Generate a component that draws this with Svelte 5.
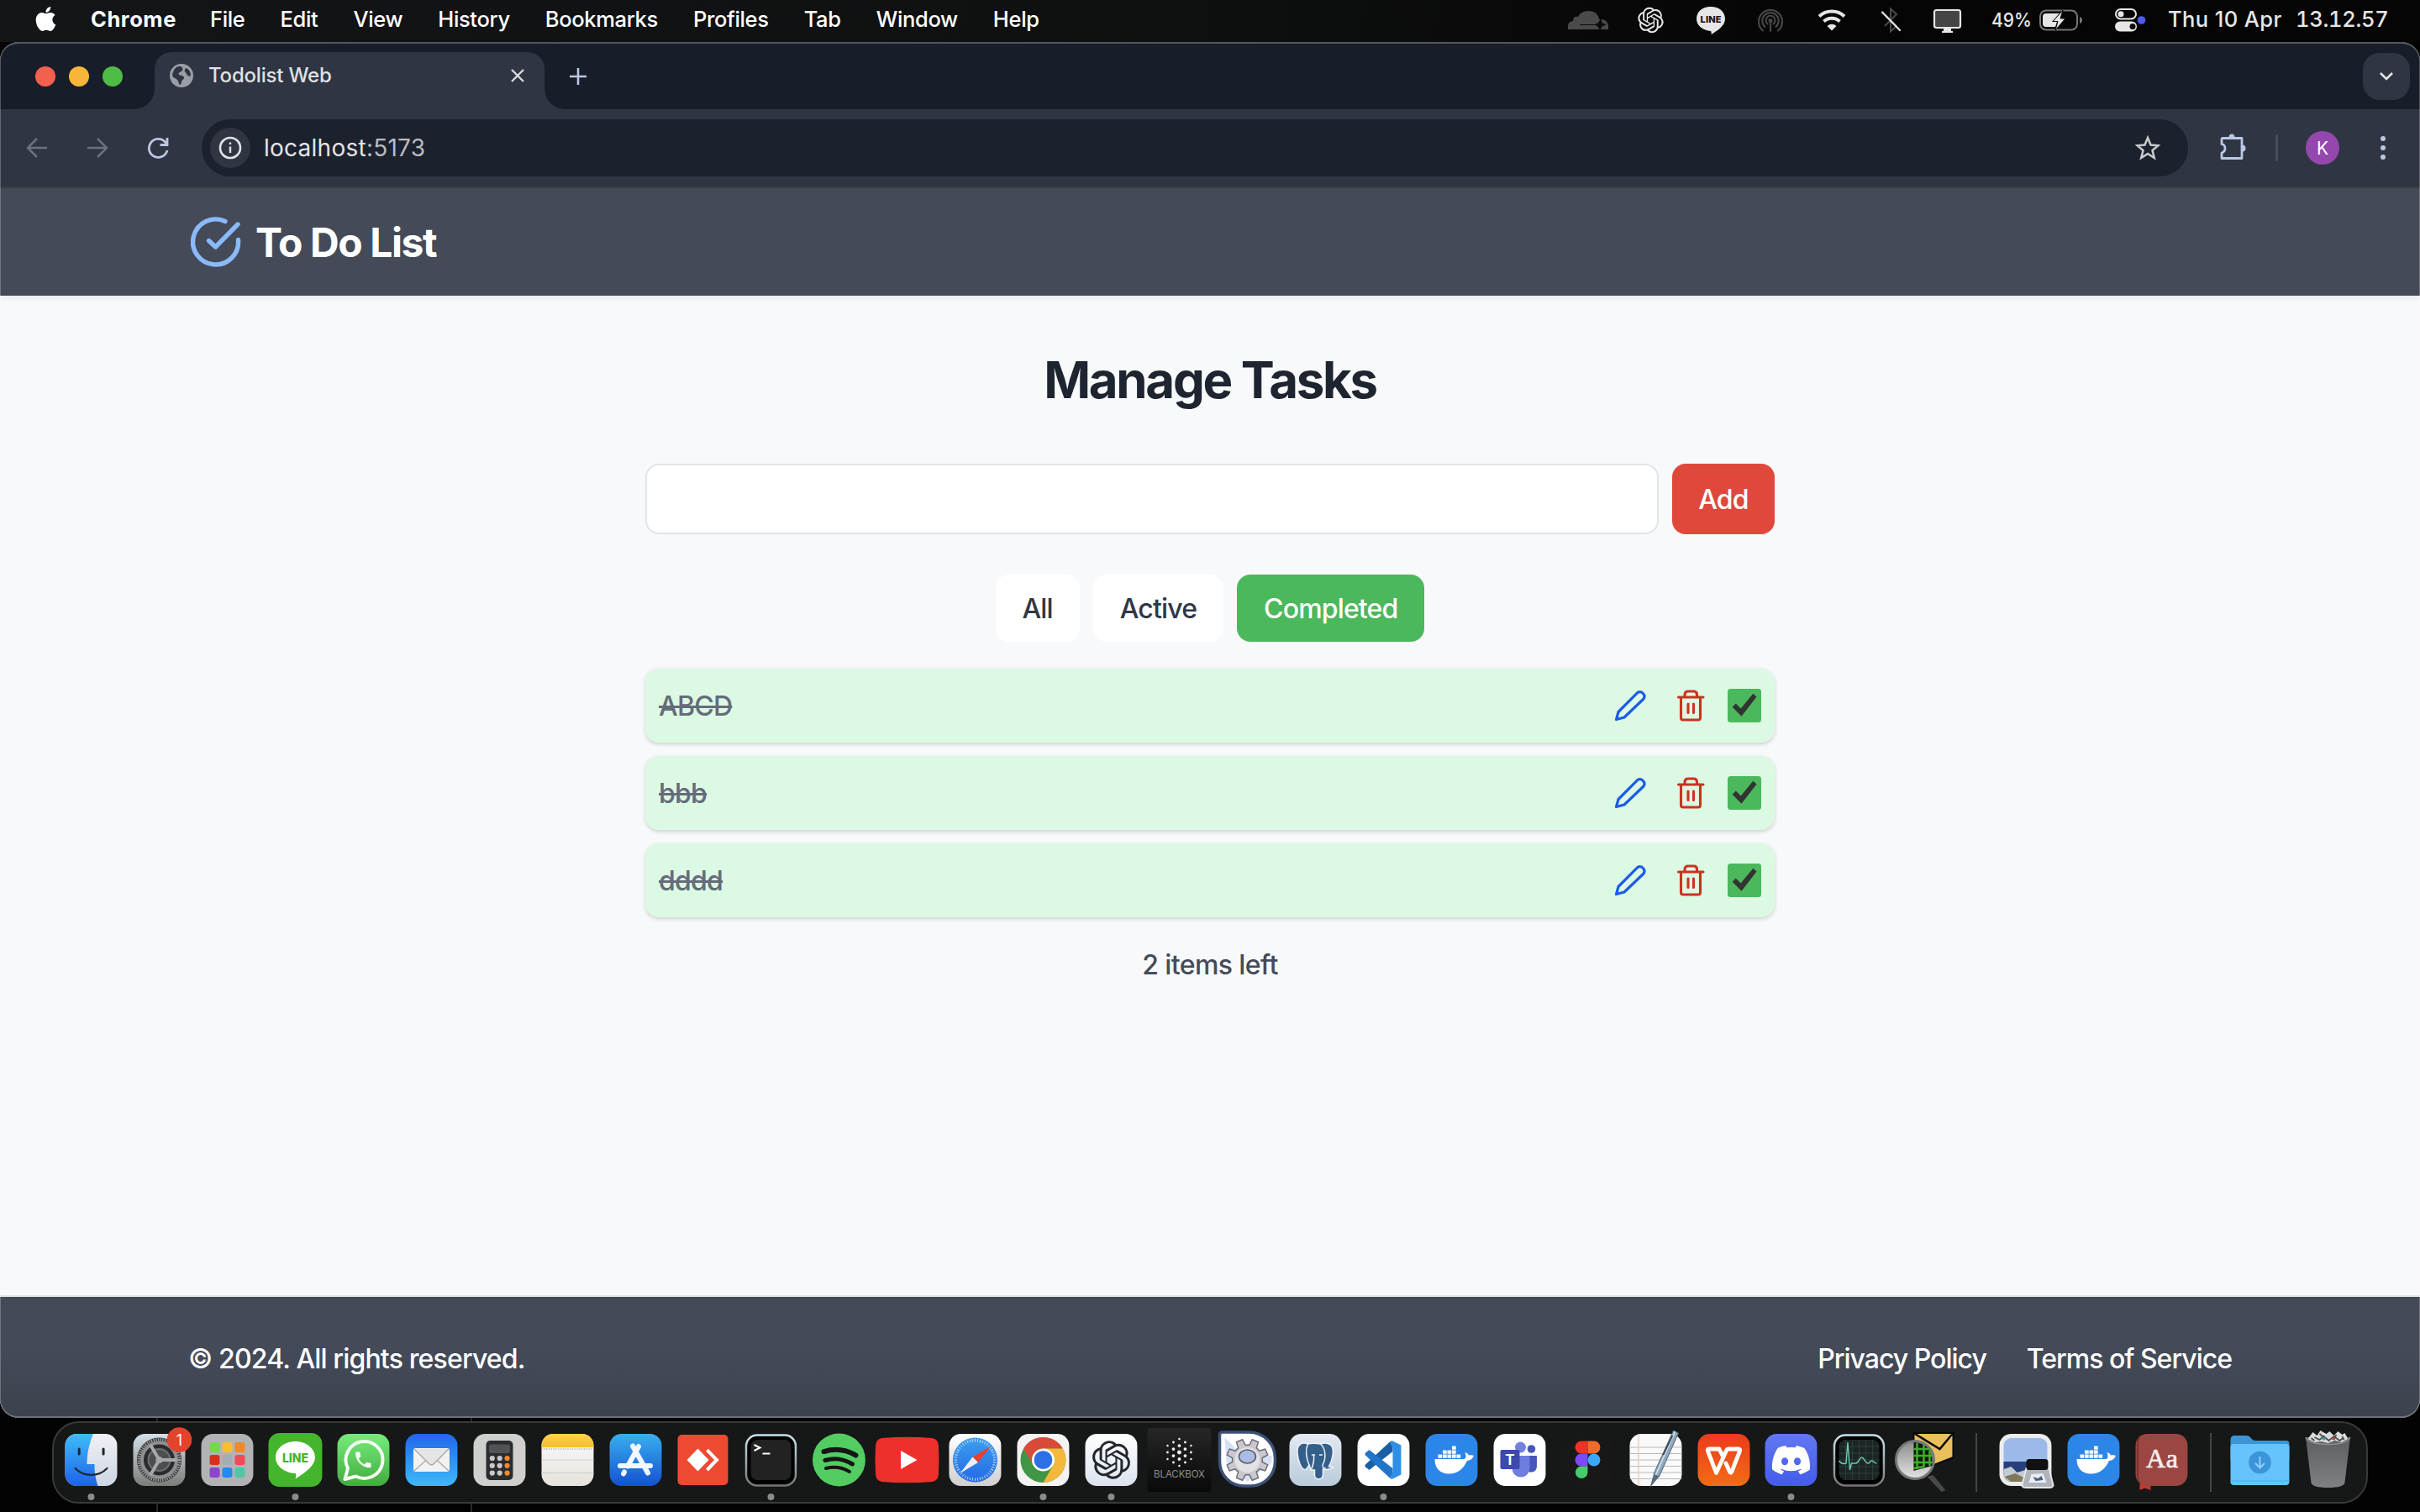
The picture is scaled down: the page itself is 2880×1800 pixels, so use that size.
<script>
  const menus = ['File', 'Edit', 'View', 'History', 'Bookmarks', 'Profiles', 'Tab', 'Window', 'Help'];
  let filter = $state('Completed');
  const filters = ['All', 'Active', 'Completed'];
  const tasks = ['ABCD', 'bbb', 'dddd'];

  const apps = [
    { id: 'finder', open: true }, { id: 'settings' }, { id: 'launchpad' }, { id: 'line', open: true },
    { id: 'whatsapp' }, { id: 'mail' }, { id: 'calculator' }, { id: 'notes' }, { id: 'appstore' },
    { id: 'anydesk' }, { id: 'terminal', open: true }, { id: 'spotify' }, { id: 'youtube' },
    { id: 'safari' }, { id: 'chrome', open: true }, { id: 'chatgpt', open: true }, { id: 'blackbox' },
    { id: 'automator' }, { id: 'postgres' }, { id: 'vscode', open: true }, { id: 'docker' },
    { id: 'teams' }, { id: 'figma' }, { id: 'textedit' }, { id: 'wps' }, { id: 'discord', open: true },
    { id: 'activity' }, { id: 'inspector' }, { id: 'sep' }, { id: 'preview' }, { id: 'docker' },
    { id: 'dictionary' }, { id: 'sep' }, { id: 'downloads' }, { id: 'trash' }
  ];

  const launch = ['#6fdc4b', '#fbbd2c', '#f08a24', '#d8301c', '#a3adb3', '#f04a58', '#8e44cf', '#2389f5', '#4fc6a4'];

  function gear(teeth, outer, inner) {
    const step = (Math.PI * 2) / teeth;
    const pts = [];
    for (let i = 0; i < teeth; i++) {
      const a = i * step + step / 2;
      for (const [f, r] of [[-0.32, inner], [-0.2, outer], [0.2, outer], [0.32, inner]]) {
        pts.push(`${(Math.cos(a + f * step) * r).toFixed(2)},${(Math.sin(a + f * step) * r).toFixed(2)}`);
      }
    }
    return pts.join(' ');
  }

  const dots = [];
  for (const [x, ys] of [[-14, [-17, -9, -1]], [-7, [-21, -13, -5, 3]], [0, [-25, -17, -9, -1, 7]], [7, [-21, -13, -5, 3]], [14, [-17, -9, -1]]]) {
    for (const y of ys) dots.push({ x, y, r: Math.max(1.1, 2.5 - Math.hypot(x, y + 9) / 13) });
  }

  const ticks = Array.from({ length: 48 }, (_, i) => i * 7.5);

  const openai = 'M22.2819 9.8211a5.9847 5.9847 0 0 0-.5157-4.9108 6.0462 6.0462 0 0 0-6.5098-2.9A6.0651 6.0651 0 0 0 4.9807 4.1818a5.9847 5.9847 0 0 0-3.9977 2.9 6.0462 6.0462 0 0 0 .7427 7.0966 5.98 5.98 0 0 0 .511 4.9107 6.051 6.051 0 0 0 6.5146 2.9001A5.9847 5.9847 0 0 0 13.2599 24a6.0557 6.0557 0 0 0 5.7718-4.2058 5.9894 5.9894 0 0 0 3.9977-2.9001 6.0557 6.0557 0 0 0-.7475-7.0729zm-9.022 12.6081a4.4755 4.4755 0 0 1-2.8764-1.0408l.1419-.0804 4.7783-2.7582a.7948.7948 0 0 0 .3927-.6813v-6.7369l2.02 1.1686a.071.071 0 0 1 .038.052v5.5826a4.504 4.504 0 0 1-4.4945 4.4944zm-9.6607-4.1254a4.4708 4.4708 0 0 1-.5346-3.0137l.142.0852 4.783 2.7582a.7712.7712 0 0 0 .7806 0l5.8428-3.3685v2.3324a.0804.0804 0 0 1-.0332.0615L9.74 19.9502a4.4992 4.4992 0 0 1-6.1408-1.6464zM2.3408 7.8956a4.485 4.485 0 0 1 2.3655-1.9728V11.6a.7664.7664 0 0 0 .3879.6765l5.8144 3.3543-2.0201 1.1685a.0757.0757 0 0 1-.071 0l-4.8303-2.7865A4.504 4.504 0 0 1 2.3408 7.872zm16.5963 3.8558L13.1038 8.364 15.1192 7.2a.0757.0757 0 0 1 .071 0l4.8303 2.7913a4.4944 4.4944 0 0 1-.6765 8.1042v-5.6772a.79.79 0 0 0-.407-.667zm2.0107-3.0231l-.142-.0852-4.7735-2.7818a.7759.7759 0 0 0-.7854 0L9.409 9.2297V6.8974a.0662.0662 0 0 1 .0284-.0615l4.8303-2.7866a4.4992 4.4992 0 0 1 6.6802 4.66zM8.3065 12.863l-2.02-1.1638a.0804.0804 0 0 1-.038-.0567V6.0742a4.4992 4.4992 0 0 1 7.3757-3.4537l-.142.0805L8.704 5.459a.7948.7948 0 0 0-.3927.6813zm1.0976-2.3654l2.602-1.4998 2.6069 1.4998v2.9994l-2.5974 1.4997-2.6067-1.4997Z';
  const discord = 'M20.317 4.3698a19.7913 19.7913 0 00-4.8851-1.5152.0741.0741 0 00-.0785.0371c-.211.3753-.4447.8648-.6083 1.2495-1.8447-.2762-3.68-.2762-5.4868 0-.1636-.3933-.4058-.8742-.6177-1.2495a.077.077 0 00-.0785-.037 19.7363 19.7363 0 00-4.8852 1.515.0699.0699 0 00-.0321.0277C.5334 9.0458-.319 13.5799.0992 18.0578a.0824.0824 0 00.0312.0561c2.0528 1.5076 4.0413 2.4228 5.9929 3.0294a.0777.0777 0 00.0842-.0276c.4616-.6304.8731-1.2952 1.226-1.9942a.076.076 0 00-.0416-.1057c-.6528-.2476-1.2743-.5495-1.8722-.8923a.077.077 0 01-.0076-.1277c.1258-.0943.2517-.1923.3718-.2914a.0743.0743 0 01.0776-.0105c3.9278 1.7933 8.18 1.7933 12.0614 0a.0739.0739 0 01.0785.0095c.1202.099.246.1981.3728.2924a.077.077 0 01-.0066.1276 12.2986 12.2986 0 01-1.873.8914.0766.0766 0 00-.0407.1067c.3604.698.7719 1.3628 1.225 1.9932a.076.076 0 00.0842.0286c1.961-.6067 3.9495-1.5219 6.0023-3.0294a.077.077 0 00.0313-.0552c.5004-5.177-.8382-9.6739-3.5485-13.6604a.061.061 0 00-.0312-.0286zM8.02 15.3312c-1.1825 0-2.1569-1.0857-2.1569-2.419 0-1.3332.9555-2.4189 2.157-2.4189 1.2108 0 2.1757 1.0952 2.1568 2.419 0 1.3332-.9555 2.4189-2.1569 2.4189zm7.9748 0c-1.1825 0-2.1569-1.0857-2.1569-2.419 0-1.3332.9554-2.4189 2.1569-2.4189 1.2108 0 2.1757 1.0952 2.1568 2.419 0 1.3332-.946 2.4189-2.1568 2.4189Z';
  const apple = 'M12.152 6.896c-.948 0-2.415-1.078-3.96-1.04-2.04.027-3.91 1.183-4.961 3.014-2.117 3.675-.546 9.103 1.519 12.09 1.013 1.454 2.208 3.09 3.792 3.039 1.52-.065 2.09-.987 3.935-.987 1.831 0 2.35.987 3.96.948 1.637-.026 2.676-1.48 3.676-2.948 1.156-1.688 1.636-3.325 1.662-3.415-.039-.013-3.182-1.221-3.22-4.857-.026-3.04 2.48-4.494 2.597-4.559-1.429-2.09-3.623-2.324-4.39-2.376-2-.156-3.675 1.09-4.61 1.09zM15.53 3.83c.843-1.012 1.4-2.427 1.245-3.83-1.207.052-2.662.805-3.532 1.818-.78.896-1.454 2.338-1.273 3.714 1.338.104 2.715-.688 3.559-1.701';
  const phone = 'M6.62 10.79c1.44 2.83 3.76 5.14 6.59 6.59l2.2-2.2c.27-.27.67-.36 1.02-.24 1.12.37 2.33.57 3.57.57.55 0 1 .45 1 1V20c0 .55-.45 1-1 1-9.39 0-17-7.61-17-17 0-.55.45-1 1-1h3.5c.55 0 1 .45 1 1 0 1.25.2 2.45.57 3.57.11.35.03.74-.25 1.02l-2.2 2.2z';
</script>

<svelte:head><title>Todolist Web</title></svelte:head>

{#snippet tile(fill)}
  <rect x="-31" y="-31" width="62" height="62" rx="14" {fill} />
{/snippet}

{#snippet glyph(id)}
  {#if id === 'finder'}
    {@render tile('url(#gFinderR)')}
    <path d="M2.500-31H-17A14 14 0 0 0-31-17V17A14 14 0 0 0-17 31H8C5 22 4 14 4 5H-5C-5-8-2-20 2.500-31Z" fill="url(#gFinder)" />
    <path d="M-14.300-13v6M14.600-13v6" stroke="#1d2733" stroke-width="3" stroke-linecap="round" />
    <path d="M-19 10C-9 20.500 9 20.500 19 10" fill="none" stroke="#1d2733" stroke-width="2.200" stroke-linecap="round" />
  {:else if id === 'settings'}
    {@render tile('url(#gSteel)')}
    <circle r="26.500" fill="#2b2c2e" />
    <circle r="24" fill="none" stroke="#9a9c9e" stroke-width="4" stroke-dasharray="1.500 1.200" />
    <circle r="20.500" fill="none" stroke="#8d8f91" stroke-width="4" />
    <circle r="13" fill="#4c4e50" stroke="#6d6f71" stroke-width="2" />
    <path d="M0 0L21 0M0 0L-10.500-18M0 0L-10.500 18" stroke="#a5a7a8" stroke-width="4" />
    <circle r="4" fill="#a5a7a8" />
  {:else if id === 'launchpad'}
    {@render tile('#b3b3b6')}
    {#each launch as c, i}
      <rect x={-21 + (i % 3) * 15} y={-21 + Math.floor(i / 3) * 15} width="12" height="12" rx="2.800" fill={c} />
    {/each}
  {:else if id === 'line'}
    <rect x="-32" y="-32" width="64" height="64" rx="13" fill="#44b52c" />
    <path d="M0-22C13-22 23.500-13.500 23.500-3C23.500 6 14 14 0 22.500C1.500 18 1 16 0 16C-13 15.500-23.500 7-23.500-3C-23.500-13.500-13-22 0-22Z" fill="#fff" />
    <text x="0" y="2.500" class="t heavy" font-size="14" text-anchor="middle" textLength="31" fill="#44b52c">LINE</text>
  {:else if id === 'whatsapp'}
    {@render tile('url(#gWa)')}
    <path d="M-22 23L-18.500 10A22 22 0 1 1-9 19.500Z" fill="none" stroke="#f4fbf2" stroke-width="4" stroke-linejoin="round" />
    <path d={phone} transform="translate(-12.500 -12.500) scale(1.030)" fill="#f4fbf2" />
  {:else if id === 'mail'}
    {@render tile('url(#gMail)')}
    <rect x="-21.500" y="-14" width="43" height="28" rx="2.500" fill="#f3f2f1" />
    <path d="M-20.500 13L-5-1M20.500 13L5-1" stroke="#a9a9ab" stroke-width="1.300" />
    <path d="M-20.500-13L-3 4.500Q0 7.500 3 4.500L20.500-13" fill="#e6e5e5" stroke="#a9a9ab" stroke-width="1.300" />
  {:else if id === 'calculator'}
    {@render tile('#d0cfcd')}
    <rect x="-16" y="-23" width="32" height="47" rx="5" fill="#2b2c2f" />
    <rect x="-12.500" y="-18.500" width="25" height="10.500" rx="2.500" fill="#515357" />
    {#each [0, 1, 2] as r}
      {#each [0, 1, 2] as c}
        <circle cx={-8.700 + c * 8.900} cy={-2 + r * 8.800} r="3.100" fill={c === 2 ? '#f08a2a' : '#c9c9c9'} />
      {/each}
    {/each}
  {:else if id === 'notes'}
    {@render tile('url(#gPaper)')}
    <path d="M-31-15V-17A14 14 0 0 1-17-31H17A14 14 0 0 1 31-17V-15Z" fill="url(#gNote)" />
    <path d="M-31-13H31" stroke="#b9b3a8" stroke-width="1.500" stroke-dasharray="1.200 1.600" />
    <path d="M-31 0H31M-31 15.500H31" stroke="#cfccc8" stroke-width="1.200" />
  {:else if id === 'appstore'}
    {@render tile('url(#gStore)')}
    <g stroke="#f1f7fd" stroke-width="6" stroke-linecap="round">
      <path d="M3.500-16L-9.500 7.500M-13.500 14.500L-14.500 16.500M-3.500-16.500L14.500 15.500M-18.500 7H17.500" />
    </g>
  {:else if id === 'anydesk'}
    <rect x="-30" y="-30" width="60" height="60" rx="5" fill="#ee4a31" />
    <path d="M-19 0L-6-13.500L7 0L-6 13.500Z" fill="#fff" />
    <path d="M5-12L16.500 0L5 12" fill="none" stroke="#fff" stroke-width="4" />
  {:else if id === 'terminal'}
    <rect x="-29.500" y="-29.500" width="59" height="60" rx="13" fill="#000" stroke="url(#gRim)" stroke-width="2.500" />
    <rect x="-24" y="-24" width="48" height="48" rx="8" fill="#222" />
    <path d="M-20-18L-13-14.500L-20-11" fill="none" stroke="#fff" stroke-width="2" />
    <path d="M-10-7.500H-1" stroke="#fff" stroke-width="2" />
  {:else if id === 'spotify'}
    <circle r="31.500" fill="#53cd62" />
    <g fill="none" stroke="#141615" stroke-linecap="round">
      <path d="M-18-10C-5-14 9-12 20-5.500" stroke-width="6" />
      <path d="M-16.500 0.500C-5-3 6-1 16 5" stroke-width="5" />
      <path d="M-15.500 10C-5 7.500 4 9 12.500 14" stroke-width="4" />
    </g>
  {:else if id === 'youtube'}
    <path d="M-30-26Q0-28.500 30-26Q37-25 37.500-17Q38.500 0 37.500 17Q37 25 30 26Q0 28.500-30 26Q-37 25-37.500 17Q-38.500 0-37.500-17Q-37-25-30-26Z" fill="#ee302d" />
    <path d="M-7.500-11L12 0L-7.500 11Z" fill="#fff" />
  {:else if id === 'safari'}
    {@render tile('url(#gWhite)')}
    <circle r="26.500" fill="url(#gSafari)" />
    {#each ticks as a}
      <path d="M0-25V-21.500" transform="rotate({a})" stroke="#cfe6fb" stroke-width="0.900" />
    {/each}
    <path d="M19-16.500L3.500 3L-3-3.500Z" fill="#e8402f" />
    <path d="M-18 16L3.500 3L-3-3.500Z" fill="#eceff2" />
  {:else if id === 'chrome'}
    {@render tile('#f3f3f3')}
    <circle r="27" fill="#409645" />
    <path d="M-23.400-13.500A27 27 0 0 1 23.400-13.500H0L-11.700 6.800Z" fill="#d94b38" />
    <path d="M23.400-13.500A27 27 0 0 1 0 27L11.700 6.800L0-13.500Z" fill="#f6b83b" />
    <circle r="13.500" fill="#fff" />
    <circle r="10.800" fill="#2f6fe6" />
  {:else if id === 'chatgpt'}
    {@render tile('url(#gGpt)')}
    <path d={openai} transform="translate(-22.800 -22.800) scale(1.900)" fill="#23272b" />
  {:else if id === 'blackbox'}
    <rect x="-38" y="-38" width="76" height="76" rx="4" fill="url(#gBlack)" />
    {#each dots as d}
      <circle cx={d.x} cy={d.y} r={d.r} fill="#f0f0f0" />
    {/each}
    <text x="0" y="21.500" class="t" font-size="11.500" text-anchor="middle" textLength="61" fill="#8f8f8f">BLACKBOX</text>
  {:else if id === 'automator'}
    <path d="M-31-33H2A31 31 0 0 1 33-2V2A29 29 0 0 1 4 31H-4A29 29 0 0 1-33 2V-31Z" fill="#fff" stroke="#3d5177" stroke-width="3.500" />
    <path d="M-27-27L-6-6L29-5V3L0 26L-25 3Z" fill="#bccdf0" opacity="0.600" />
    <polygon points={gear(8, 25, 18)} fill="#c9c9cd" stroke="#6f6e7a" stroke-width="1.500" stroke-linejoin="round" />
    <circle r="15" fill="#e2e2e5" />
    <ellipse cy="-4" rx="10" ry="8" fill="#a9bce4" stroke="#5b5a68" stroke-width="1.500" />
  {:else if id === 'postgres'}
    {@render tile('url(#gPg)')}
    <path d="M-9-19C-16-22-22-18-21.500-9C-21 1-17 10-13.500 11.500C-11 12.500-9 8-7.500 6L-5 12H-1V18C-1 24 9 25 9 17V11C13 12 18 11 21 9L16 8C20 1 23-12 19-17C15-21 9-20 6-19C1-20-5-20-9-19Z" fill="#335f8a" stroke="#eef3f7" stroke-width="1.500" />
    <path d="M-9-19C-13-10-10 0-7.500 6M6-19C12-14 13-3 9 5C8 8 9 10 12 10M-5 12C-3 6-1 2-2-5M-4-6h3M5-6h3" fill="none" stroke="#eef3f7" stroke-width="1.500" stroke-linecap="round" />
  {:else if id === 'vscode'}
    {@render tile('#fff')}
    <path d="M8-22L11-15V-10L-17 12L-22 8V6Z" fill="#1a5fa6" />
    <path d="M-22-6V-8L-17-12L11 10V15L8 22Z" fill="#1f76c8" />
    <path d="M9-22.500Q10-23 11-22.500L21-17.500V17.500L11 22.500Q9 23 8 22L11 14V-14L8-22Z" fill="#2f8fe6" />
  {:else if id === 'docker'}
    {@render tile('#2c86e8')}
    <path d="M-20-1H14C17-1 18-3 16-9C19-8 20-7 20.500-5.500C23-6 25-6 26.500-5C25-1 22 1 18.500 1C14 11 7 16.500-3 16.500C-14 16.500-20 10-20-1Z" fill="#fff" />
    {#each [[-16, -6.500], [-10.500, -6.500], [-5, -6.500], [0.500, -6.500], [6, -6.500], [-10.500, -11.500], [-5, -11.500], [0.500, -11.500], [0.500, -16.500]] as [x, y]}
      <rect {x} {y} width="4.700" height="4.200" fill="#fff" />
    {/each}
  {:else if id === 'teams'}
    {@render tile('#fff')}
    <circle cx="14" cy="-13" r="4.800" fill="#4656bd" />
    <path d="M8-5H20.500V8A7 7 0 0 1 8 12Z" fill="#4656bd" />
    <circle cx="1" cy="-15" r="6.500" fill="#7580de" />
    <path d="M-9-5H12V10A10.500 10.500 0 0 1-9 10Z" fill="#6f7ce0" />
    <rect x="-23" y="-12" width="23" height="23" rx="2" fill="#3f48ad" />
    <text x="-11.500" y="6" class="t bold" font-size="17" text-anchor="middle" fill="#fff">T</text>
  {:else if id === 'figma'}
    {@render tile('#191818')}
    <path d="M0-22.500H-7.500A7.300 7.300 0 0 0-7.500-7.500H0Z" fill="#ee3322" />
    <path d="M0-22.500H7.500A7.300 7.300 0 0 1 7.500-7.500H0Z" fill="#f36b2b" />
    <path d="M0-7.500H-7.500A7.300 7.300 0 0 0-7.500 7.500H0Z" fill="#7a4cf5" />
    <circle cx="7.500" r="7.500" fill="#3aa9fb" />
    <path d="M0 7.500H-7.500A7.300 7.300 0 1 0 0 15Z" fill="#47cb6c" />
  {:else if id === 'textedit'}
    {@render tile('#fafafa')}
    <path d="M-31-15H31M-31-7.500H31M-31 0H31M-31 7.500H31M-31 15H31M-31 22.500H31" stroke="#b9b9b9" stroke-width="1" />
    <path d="M-20.500-31V31" stroke="#f3c3c0" stroke-width="1.300" />
    <path d="M21-35L27-32L4 20L-2.500 17Z" fill="#8fa9bf" stroke="#4e6172" stroke-width="1" />
    <path d="M23-34L0 18" stroke="#d6e4ee" stroke-width="1.500" />
    <path d="M-2.500 17L4 20L-7 33Z" fill="#596a78" />
    <path d="M20-29L9-6" stroke="#30353c" stroke-width="1.500" />
  {:else if id === 'wps'}
    {@render tile('url(#gWps)')}
    <path d="M-1-4L-5.500-13H-17.500Q-20-13-19-10.500L-9 15.500L3-11Q4-13 6-13H17.500Q20-13 19-10.500L9.500 14Q8.500 16.500 7 14L2.500 4" fill="none" stroke="#fff" stroke-width="4.800" stroke-linejoin="round" stroke-linecap="round" />
  {:else if id === 'discord'}
    {@render tile('url(#gDiscord)')}
    <path d={discord} transform="translate(-22.500 -22.500) scale(1.880)" fill="#fff" />
  {:else if id === 'activity'}
    <rect x="-29.500" y="-29.500" width="59" height="60" rx="13" fill="#000" stroke="url(#gRim)" stroke-width="2.500" />
    <rect x="-24" y="-24" width="48" height="48" rx="8" fill="#1b2624" />
    <path d="M-16-24V24M-8-24V24M0-24V24M8-24V24M16-24V24M-24-16H24M-24-8H24M-24 0H24M-24 8H24M-24 16H24" stroke="#2e3f3c" stroke-width="1" />
    <path d="M-24 1Q-20 6-15.500 4L-13.500-21L-11 12L-9 4H-4C0 4 0-3 3-3C6-3 7 4 11 4C13 4 13 1 15 1C17 1 18 4 21 4" fill="none" stroke="#6fc9b4" stroke-width="1.400" />
  {:else if id === 'inspector'}
    <path d="M-16-32H31V-3L8 6L-16-10Z" fill="#eabf5e" stroke="#0a0a0a" stroke-width="2" stroke-linejoin="round" />
    <path d="M-16-32L15-13L31-32" fill="none" stroke="#0a0a0a" stroke-width="2.500" />
    <path d="M0 20L7 18L22 36L17 38Z" fill="#4a4748" />
    <circle cx="-14.500" cy="0" r="22.500" fill="url(#gLens)" stroke="#77787a" stroke-width="3" />
    <path d="M-16-21Q3-20 6-3V7L-16 13Z" fill="#0b1a08" />
    <path d="M-12-20V11M-4-18V9M3-11V7M-16-13H3M-16-5H6M-16 3H6M-16 10L-4 8" stroke="#3fae2c" stroke-width="2.500" />
  {:else if id === 'preview'}
    {@render tile('#ececec')}
    <rect x="-26" y="-26" width="52" height="52" rx="9" fill="#9db9ea" />
    <path d="M-26 2H26V17A9 9 0 0 1 17 26H-17A9 9 0 0 1-26 17Z" fill="#27407c" />
    <path d="M-26 11L-17 8L-10 15L0 12V26H-17A9 9 0 0 1-26 17Z" fill="#c3ccd2" />
    <path d="M-25 20L-12 16L0 22V26H-17Z" fill="#81785b" />
    <path d="M1 10H28L33 30Q33 33 28 33H1Q-4 33-4 30Z" fill="#aeb4b9" stroke="#e3e5e8" stroke-width="2" />
    <path d="M7 17L21 16L25 27H4Z" fill="#e8edf2" />
    <path d="M9 20l6 2 4-3 2 5-9 1z" fill="#4b607e" />
    <rect x="1" y="-1" width="26" height="13" rx="3.500" fill="#111" />
  {:else if id === 'dictionary'}
    <path d="M-26 27V36L-20 33.500L-13 36V27Z" fill="#c43a2a" />
    {@render tile('#9b4642')}
    <path d="M-26-28Q-29-25-28.500-17V20Q-28 26-25 29" fill="none" stroke="#6f2d2b" stroke-width="1.500" />
    <text x="0.500" y="9" class="serif" font-size="32" text-anchor="middle" textLength="38" fill="#f5ecea" stroke="#f5ecea" stroke-width="0.700">Aa</text>
  {:else if id === 'downloads'}
    <path d="M-35-24Q-35-29-30-29H-16Q-13-29-11-26.500Q-8.500-23-5-23H31Q35-23 35-19V0H-35Z" fill="#3c95d2" />
    <rect x="-35" y="-19" width="70" height="49" rx="4" fill="#67c3fb" />
    <path d="M-35 25H35" stroke="#52aee8" stroke-width="1.200" />
    <circle cy="3" r="13.300" fill="#3c95d8" />
    <path d="M0-4V9M-5.500 4L0 9.500L5.500 4" fill="none" stroke="#8bd1fb" stroke-width="2" />
  {:else if id === 'trash'}
    <path d="M-26.500-27L-20 27Q-19 33 0 33Q19 33 20 27L26.500-27Z" fill="url(#gBin)" />
    <path d="M-24-25L-18-33L-13-29L-9-35L-2-31L2-34L7-29L12-34L17-30L20-32L24-25L16-21L8-23L0-20L-8-22L-16-21Z" fill="#dcdcdc" />
    <path d="M-16-27l6 3 5-4 6 5 6-5 7 5 4-3M-10-31l5 4M10-30l-3 5M-20-26l4 3M17-28l2 4" fill="none" stroke="#4c4c4c" stroke-width="1.800" />
    <path d="M-9-26l7-1-2 4z" fill="#3a9f9a" />
    <path d="M3-25l5-2 1 4z" fill="#b3573c" />
    <path d="M-26.500-27Q-24-19 0-18.500Q24-19 26.500-27" fill="none" stroke="#8d9193" stroke-width="1.500" />
  {/if}
{/snippet}

<div class="desktop">
  <svg class="defs" width="0" height="0" aria-hidden="true">
    <defs>
      {#each [
        ['gFinder', '#3fbcf9', '#1e63e9'], ['gFinderR', '#f1f1f3', '#ccd6e4'], ['gSteel', '#d3e0e8', '#7d7c78'],
        ['gWa', '#76ec7b', '#42ab3e'], ['gMail', '#2167ea', '#3db9fa'], ['gPaper', '#fbfaf9', '#e6e3de'],
        ['gNote', '#ffd24d', '#f9bd2b'], ['gStore', '#3aaef0', '#1452d2'], ['gRim', '#c9e2ee', '#777'],
        ['gWhite', '#ffffff', '#cfcfcf'], ['gSafari', '#3b9ff0', '#2569e3'], ['gGpt', '#ffffff', '#dce3f0'],
        ['gBlack', '#262626', '#090909'], ['gPg', '#e3e9f1', '#b9cbda'], ['gWps', '#ee3a1b', '#f26c15'],
        ['gDiscord', '#6277f0', '#445cec'], ['gLens', '#8c8c8c', '#e4e4e4'], ['gBin', '#5c5f60', '#7d8182']
      ] as [id, a, b]}
        <linearGradient {id} x1="0" y1="0" x2="0" y2="1">
          <stop offset="0" stop-color={a} /><stop offset="1" stop-color={b} />
        </linearGradient>
      {/each}
    </defs>
  </svg>

  <div class="menubar">
    <svg class="apple" viewBox="0 0 24 24"><path d={apple} fill="#fff" /></svg>
    <span class="appname">Chrome</span>
    <nav class="menus">
      {#each menus as m}<span>{m}</span>{/each}
    </nav>
    <svg class="status" viewBox="1860 0 700 48">
      <path d="M1866 35V31Q1866 26 1872 25Q1872 19 1878 20Q1881 13 1891 13Q1901 13 1903 23Q1913 22 1914 31V35Z" fill="#4a4a4a" />
      <path d="M1880 29.500H1898M1905 23Q1905 29 1911 29.500Q1905 30 1904 36Q1903 30 1898 29.500Q1903 29 1905 23" fill="#0b0b0b" stroke="#0b0b0b" stroke-width="1.200" />
      <path d={openai} transform="translate(1949.200 8.700) scale(1.270)" fill="#e6e6e6" />
      <path d="M2036 8C2046 8 2053 14 2053 22.500C2053 31 2043 37 2036.500 41Q2037 38 2036 37C2026 36 2019 30 2019 22.500C2019 14 2026 8 2036 8Z" fill="#e6e6e6" />
      <text x="2036" y="26.500" class="t heavy" font-size="11" text-anchor="middle" textLength="25" fill="#111">LINE</text>
      <g fill="none" stroke="#454545" stroke-width="2.200" stroke-linecap="round">
        <path d="M2098 36.500A14 14 0 1 1 2116 36.500M2100.500 32A9.700 9.700 0 1 1 2113.500 32M2103.500 28.500A5.500 5.500 0 1 1 2110.500 28.500" />
        <path d="M2107 25V37" />
      </g>
      <circle cx="2107" cy="24.500" r="2.500" fill="#454545" />
      <g fill="none" stroke="#e6e6e6" stroke-width="4">
        <path d="M2165 19.500A22 22 0 0 1 2195 19.500M2170.500 25.500A14 14 0 0 1 2189.500 25.500" />
      </g>
      <path d="M2180 36.500L2174.500 31A8 8 0 0 1 2185.500 31Z" fill="#e6e6e6" />
      <path d="M2243 17L2257 31L2250 37.500V10.500L2257 17L2243 31" fill="none" stroke="#4a4a4a" stroke-width="2" />
      <path d="M2240 14.500L2261 36" stroke="#e6e6e6" stroke-width="2.200" stroke-linecap="round" />
      <rect x="2302" y="12" width="31" height="21" rx="2.500" fill="#454545" stroke="#e6e6e6" stroke-width="2.200" />
      <path d="M2313 34H2322V37H2324V39H2311V37H2313Z" fill="#e6e6e6" />
      <text x="2370" y="32" class="t medium" font-size="23" textLength="48" lengthAdjust="spacingAndGlyphs" fill="#e6e6e6">49%</text>
      <rect x="2428" y="12.500" width="44" height="23" rx="7" fill="none" stroke="#767676" stroke-width="2" />
      <path d="M2431 20Q2431 16 2435 16H2451L2442 26H2448L2446 32H2435Q2431 32 2431 28Z" fill="#e6e6e6" />
      <path d="M2455 12L2443 25.500H2449L2446 36L2458 22H2452Z" fill="#e6e6e6" stroke="#0a0a0a" stroke-width="1" />
      <path d="M2475 20Q2478 21 2478 24Q2478 27 2475 28Z" fill="#767676" />
      <rect x="2518" y="11" width="24" height="11.500" rx="5.700" fill="none" stroke="#e6e6e6" stroke-width="2" />
      <circle cx="2524" cy="16.700" r="3.500" fill="#e6e6e6" />
      <rect x="2517" y="25.500" width="26" height="12" rx="6" fill="#e6e6e6" />
      <circle cx="2538" cy="31.500" r="3.500" fill="#0a0a0a" />
      <circle cx="2548.500" cy="24" r="4.800" fill="#4f5bea" />
    </svg>
    <span class="clock"><span>Thu 10 Apr</span><span class="time">13.12.57</span></span>
  </div>

  <div class="window">
    <div class="tabstrip">
      <div class="lights"><i class="red"></i><i class="amber"></i><i class="green"></i></div>
      <div class="tab">
        <svg class="globe" viewBox="0 0 28 28">
          <circle cx="14" cy="14" r="14" fill="#9a9fa6" />
          <path d="M11 3C15 3 16 5 15 8C14 10 11 9 10.500 12C10 14 16 13 17 16C18 18 14 19 14 22C14 24 12 26 11 24C10 20 9 18 6 17C3 16 3 13 3.500 11C5 6 8 3 11 3Z" fill="#2f3542" />
          <path d="M19 5C23 6 25 10 25 14C23 16 21 14 20 12C19 10 17 9 18 7Z" fill="#2f3542" />
        </svg>
        <span>Todolist Web</span>
        <svg class="close" viewBox="0 0 16 16"><path d="M1 1L15 15M15 1L1 15" stroke="#d9dbdf" stroke-width="2.400" /></svg>
      </div>
      <svg class="plus" viewBox="0 0 20 20"><path d="M10 0V20M0 10H20" stroke="#bcc7e3" stroke-width="2.600" /></svg>
      <div class="chev"><svg viewBox="0 0 16 10"><path d="M1 1L8 8L15 1" fill="none" stroke="#e3e4e8" stroke-width="2.600" /></svg></div>
    </div>

    <div class="toolbar">
      <svg class="nav" viewBox="0 0 26 26"><path d="M25 13H2.500M13 2L2 13L13 24" fill="none" stroke="#6a7180" stroke-width="2.500" /></svg>
      <svg class="nav" viewBox="0 0 26 26"><path d="M1 13H23.500M13 2L24 13L13 24" fill="none" stroke="#6a7180" stroke-width="2.500" /></svg>
      <svg class="nav" viewBox="0 0 26 26"><path d="M24 16A11 11 0 1 1 21.500 6L23 8M24 1V9.500H15.500" fill="none" stroke="#bcc7e3" stroke-width="2.800" /></svg>
      <div class="omnibox">
        <span class="info"><svg viewBox="0 0 28 28"><circle cx="14" cy="14" r="12" fill="none" stroke="#e1e2e6" stroke-width="2.600" /><path d="M14 12.500V20M14 7.500V10" stroke="#e1e2e6" stroke-width="2.400" /></svg></span>
        <span class="url">localhost<b>:5173</b></span>
        <svg class="star" viewBox="0 0 30 30"><path d="M15 3L18.500 11.500L27.500 12.200L20.500 18L22.800 27L15 22L7.200 27L9.500 18L2.500 12.200L11.500 11.500Z" fill="none" stroke="#c9cacd" stroke-width="2.500" /></svg>
      </div>
      <svg class="puzzle" viewBox="0 0 34 34">
        <path d="M4 7Q4 5.500 5.500 5.500H28V29.500H4V23Q8 21.500 8 17.500Q8 13.500 4 12.500Z" fill="none" stroke="#bcc7e3" stroke-width="2.800" stroke-linejoin="round" />
        <path d="M12.500 5Q12.500 0.500 16 0.500Q19.500 0.500 19.500 5ZM28.500 13.500Q32.500 13.500 32.500 17.500Q32.500 21.500 28.500 21.500Z" fill="#bcc7e3" />
      </svg>
      <span class="divider"></span>
      <span class="avatar">K</span>
      <svg class="kebab" viewBox="0 0 8 30"><circle cx="4" cy="4" r="3" fill="#bcc7e3" /><circle cx="4" cy="15" r="3" fill="#bcc7e3" /><circle cx="4" cy="26" r="3" fill="#bcc7e3" /></svg>
    </div>

    <header>
      <svg class="logo" viewBox="0 0 60 60">
        <path d="M41 5.500A27 27 0 1 0 56.500 27.500" fill="none" stroke="#8abaf9" stroke-width="5.400" stroke-linecap="round" />
        <path d="M21.500 28.500L29.500 36L56 9" fill="none" stroke="#8abaf9" stroke-width="5.400" stroke-linecap="round" stroke-linejoin="round" />
      </svg>
      <strong>To Do List</strong>
    </header>

    <main>
      <h1>Manage Tasks</h1>
      <div class="entry">
        <input type="text" aria-label="New task" />
        <button class="add">Add</button>
      </div>
      <div class="filters">
        {#each filters as f}
          <button class:on={filter === f} onclick={() => (filter = f)}>{f}</button>
        {/each}
      </div>
      <ul>
        {#each tasks as t}
          <li>
            <span class="label"><s>{t}</s></span>
            <svg class="pencil" viewBox="0 0 40 40"><path d="M3.500 36.500L6 27.500L28.500 4.800A5.300 5.300 0 0 1 36 12L13 34Z" fill="none" stroke="#1d5be8" stroke-width="3.200" stroke-linejoin="round" /></svg>
            <svg class="bin" viewBox="0 0 40 40">
              <path d="M5.500 10H35M8.500 10V34.500Q8.500 37 11 37H29Q31.500 37 31.500 34.500V10M13 9.500V7Q13 3 17 3H23.500Q27.500 3 27.500 7V9.500M17 18V28.500M23.500 18V28.500" fill="none" stroke="#cb3222" stroke-width="3.100" stroke-linecap="round" />
            </svg>
            <svg class="check" viewBox="0 0 40 40"><rect width="40" height="40" rx="3.500" fill="#4cb85c" /><path d="M5.700 21.700L9.800 17.600L15.700 23.500L30.300 5.700L34.500 9.500L16.500 32.700Z" fill="#333" /></svg>
          </li>
        {/each}
      </ul>
      <p>2 items left</p>
    </main>

    <footer>
      <span class="copy">© 2024. All rights reserved.</span>
      <nav><span>Privacy Policy</span><span>Terms of Service</span></nav>
    </footer>
  </div>

  <div class="dock">
    {#each apps as a}
      {#if a.id === 'sep'}
        <span class="sep"></span>
      {:else}
        <svg class="app" viewBox="-40.500 -44 81 94">
          {@render glyph(a.id)}
          {#if a.id === 'settings'}
            <circle cx="24" cy="-24" r="14.800" fill="#e2432d" />
            <text x="24" y="-17.500" class="t" font-size="18" text-anchor="middle" fill="#fff">1</text>
          {/if}
          {#if a.open}<circle cy="44" r="4" fill="#8b8b8b" />{/if}
        </svg>
      {/if}
    {/each}
  </div>
</div>

<style>
  :global(body) { margin: 0; background: #000; }
  .desktop { width: 2880px; height: 1800px; display: flex; flex-direction: column; background: linear-gradient(90deg, transparent 186px, #29292b 186px, #29292b 188px, transparent 188px, transparent 560px, #29292b 560px, #29292b 562px, transparent 562px), #030304; overflow: hidden; font-family: Inter, 'Liberation Sans', sans-serif; box-sizing: border-box; }
  .desktop :global(*) { box-sizing: border-box; }
  .defs { position: absolute; }
  .t { font-family: Inter, sans-serif; }
  .heavy { font-weight: 800; }
  .bold { font-weight: 700; }
  .medium { font-weight: 450; }
  .serif { font-family: 'Liberation Serif', serif; }
  svg { flex: none; display: block; }

  .menubar { flex: none; height: 50px; padding: 0 38px 5px 40px; display: flex; align-items: center; color: #fff; font-size: 25.5px; background: linear-gradient(90deg, #141517 0%, #0e0f0f 50%, #050505 75%, #050505); }
  .apple { width: 29px; height: 31px; }
  .appname { margin-left: 39px; width: 100px; font-weight: 700; letter-spacing: 0.55px; }
  .menus { display: flex; gap: 42px; margin-left: 42px; font-weight: 500; letter-spacing: -0.34px; }
  .status { width: 700px; height: 48px; margin: 2px 0 0 auto; }
  .clock { display: flex; margin-left: 20px; color: #e6e6e6; width: 262px; white-space: nowrap; font-weight: 450; letter-spacing: 0.4px; }
  .clock span { width: 152px; flex: none; }
  .clock .time { width: 110px; font-variant-numeric: tabular-nums; letter-spacing: -0.3px; }

  .window { position: relative; flex: none; height: 1638px; display: flex; flex-direction: column; border-radius: 22px; overflow: hidden; background: #f8f9fb; }
  .window::after { content: ''; position: absolute; inset: 0; border: 2px solid rgba(255, 255, 255, 0.25); border-width: 2px 1px; border-radius: 22px; pointer-events: none; }
  .tabstrip { flex: none; height: 80px; background: #181e29; display: flex; align-items: center; padding: 2px 12px 0 42px; position: relative; }
  .lights { display: flex; gap: 16px; width: 142px; }
  .lights i { width: 24px; height: 24px; border-radius: 50%; }
  .red { background: #f2604f; }
  .amber { background: #f7b53a; }
  .green { background: #4fbc46; }
  .tab { position: relative; width: 464px; height: 68px; margin-top: 10px; padding: 0 24px 12px 18px; display: flex; align-items: center; background: #2f3542; border-radius: 20px 20px 0 0; color: #dfe1e5; font-size: 24px; font-weight: 450; letter-spacing: -0.2px; }
  .tab span { margin-bottom: 1px; }
  .tab::before, .tab::after { content: ''; position: absolute; bottom: 0; width: 24px; height: 24px; }
  .tab::before { left: -24px; background: radial-gradient(circle at 0 0, transparent 23.5px, #2f3542 24px); }
  .tab::after { right: -24px; background: radial-gradient(circle at 100% 0, transparent 23.5px, #2f3542 24px); }
  .globe { width: 28px; height: 28px; margin-right: 18px; }
  .close { width: 16px; height: 16px; margin-left: auto; }
  .plus { width: 20px; height: 20px; margin-left: 30px; }
  .chev { margin-left: auto; width: 56px; height: 56px; border-radius: 20px; background: #2f3542; display: grid; place-items: center; }
  .chev svg { width: 16px; height: 10px; }

  .toolbar { flex: none; height: 94px; padding: 0 40px 0 31px; display: flex; align-items: center; background: #2f3542; border-bottom: 2px solid #3c3f44; }
  .nav { width: 26px; height: 26px; margin-right: 46px; }
  .nav:nth-child(3) { margin-right: 39px; }
  .omnibox { width: 2364px; height: 68px; border-radius: 34px; background: #1c212e; display: flex; align-items: center; padding: 0 33px 0 10px; }
  .info { width: 48px; height: 48px; border-radius: 50%; background: #2f3542; display: grid; place-items: center; }
  .info svg { width: 28px; height: 28px; }
  .url { margin: 0 0 0 16px; font-size: 28px; color: #e3e4e8; letter-spacing: 0.25px; }
  .url b { font-weight: 400; color: #b9bbc0; }
  .star { width: 30px; height: 30px; margin-left: auto; }
  .puzzle { width: 34px; height: 34px; margin-left: 36px; }
  .divider { width: 3px; height: 32px; background: #474d5b; margin-left: 34px; border-radius: 2px; }
  .avatar { width: 40px; height: 40px; margin-left: 33px; border-radius: 50%; background: #9448ad; color: #fff; font-size: 21px; display: grid; place-items: center; }
  .kebab { width: 8px; height: 30px; margin-left: auto; }

  header { flex: none; position: relative; height: 128px; padding: 0 226px 0 227px; display: flex; align-items: center; gap: 17px; background: #444a58; box-shadow: 0 2px 8px rgba(0, 0, 0, 0.08); }
  .logo { width: 60px; height: 60px; }
  header strong { font-size: 48px; font-weight: 700; color: #fff; letter-spacing: -1.4px; }

  main { flex: 1; width: 1344px; margin: 0 auto; padding-top: 64px; display: flex; flex-direction: column; }
  h1 { margin: 0 0 64px; font-size: 60px; line-height: 72px; font-weight: 700; color: #1e2530; text-align: center; letter-spacing: -2.3px; }
  .entry { display: flex; gap: 16px; height: 84px; }
  .entry input { flex: 1; min-width: 0; border: 2px solid #e2e4e9; border-radius: 16px; background: #fff; }
  button { border: 0; font: 450 32px Inter, sans-serif; letter-spacing: -0.85px; border-radius: 16px; padding: 0 32px; }
  .add { background: #df483b; color: #fff; width: 122px; padding: 0 31px; }
  .filters { display: flex; justify-content: center; gap: 16px; margin-top: 48px; height: 80px; }
  .filters button { background: #fff; color: #2f3747; }
  .filters .on { background: #4cb85c; color: #fff; }
  ul { list-style: none; margin: 32px 0 0; padding: 0; display: grid; gap: 16px; }
  li { height: 88px; border-radius: 16px; background: #dcfae3; display: flex; align-items: center; padding: 0 16px; box-shadow: 0 2px 5px rgba(0, 0, 0, 0.17); }
  .label { flex: 1; font-size: 32px; font-weight: 450; color: #656b7a; letter-spacing: -0.75px; }
  .label s { text-decoration-thickness: 2.5px; }
  li svg { width: 40px; height: 40px; }
  .bin { margin: 0 24px 0 32px; }
  p { margin: 33px 0 0; font-size: 32px; font-weight: 450; line-height: 48px; text-align: center; color: #444b59; letter-spacing: -0.6px; }

  footer { flex: none; height: 146px; padding: 2px 224px 0; display: flex; align-items: center; justify-content: space-between; color: #fff; font-size: 32px; font-weight: 450; letter-spacing: -0.85px; border-top: 2px solid #e0e2e8; background: linear-gradient(#444a58 0, #444a58 45%, #3b424d 100%); }
  footer nav { display: flex; gap: 48px; letter-spacing: -1px; }

  .dock { flex: none; align-self: flex-start; width: 2756px; height: 98px; margin: 4px 0 0 62px; border: 2px solid #39393a; border-radius: 32px; background: #161717; display: flex; padding-left: 4px; }
  .app { width: 80.950px; height: 94px; overflow: visible; }
  .sep { width: 36px; flex: none; display: grid; place-items: center; }
  .sep::before { content: ''; width: 2px; height: 70px; background: #454545; }
</style>
